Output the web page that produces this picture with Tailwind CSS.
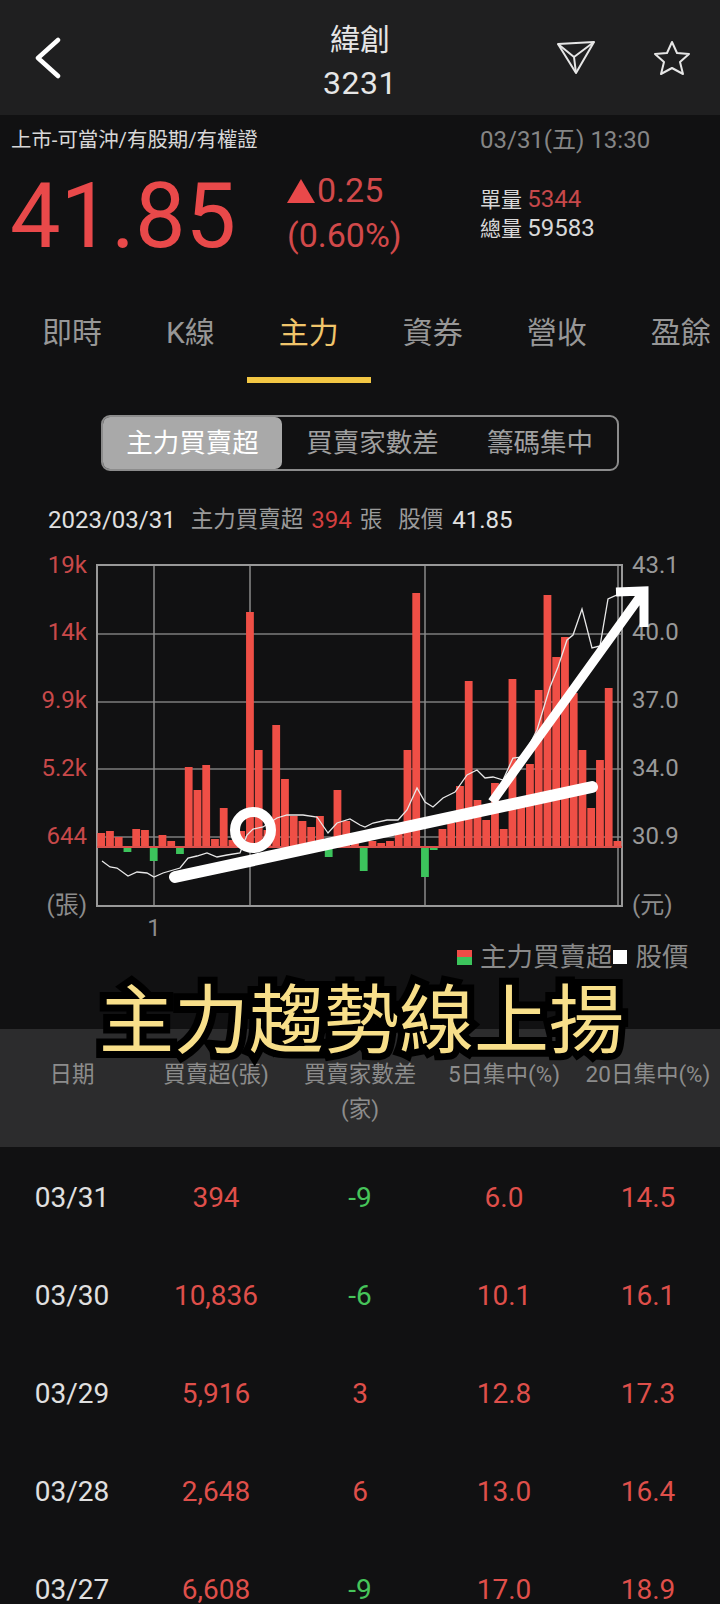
<!DOCTYPE html>
<html lang="zh-Hant">
<head>
  <meta charset="UTF-8" />
  <meta name="viewport" content="width=device-width, initial-scale=1.0"/>
  <title>緯創 3231</title>
  <script src="https://cdn.jsdelivr.net/npm/@tailwindcss/browser@4"></script>
</head>
<body class="bg-[#111112] font-['Roboto','Noto_Sans_CJK_TC',sans-serif]">
<div class="relative w-[720px] h-[1604px] overflow-hidden">

  <!-- Header -->
  <header class="h-[115px] bg-[#1f1f20] grid grid-cols-3 items-center">
    <div class="pl-[35px]">
      <svg class="w-[28px] h-[42px]" viewBox="0 0 28 42" fill="none" stroke="#fff" stroke-width="4.5" stroke-linecap="round" stroke-linejoin="round">
        <path d="M23 3 L3 21 L23 39"/>
      </svg>
    </div>
    <div class="text-center text-[#e6e6e6] pt-[8px]">
      <div class="text-[30px] leading-[42px]">緯創</div>
      <div class="text-[32px] leading-[44px] tracking-[0.5px]">3231</div>
    </div>
    <div class="flex justify-end items-center gap-[58px] pr-[29px]">
      <svg class="w-[38px] h-[34px]" viewBox="0 0 38 34" fill="none" stroke="#e6e6e6" stroke-width="2" stroke-linejoin="round">
        <path d="M1 3 L37 1 L19 32 Z"/>
        <path d="M1 3 L17 16 L19 32 M17 16 L37 1"/>
      </svg>
      <svg class="w-[38px] h-[36px]" viewBox="0 0 38 36" fill="none" stroke="#e6e6e6" stroke-width="2" stroke-linejoin="round">
        <path d="M19 2 L24 13 L36 14 L27 22 L30 34 L19 28 L8 34 L11 22 L2 14 L14 13 Z"/>
      </svg>
    </div>
  </header>

  <!-- Quote -->
  <section class="h-[186px] pl-[11px] pt-[11px]">
    <div class="flex items-center h-[28px]">
      <span class="w-[469px] text-[20.4px] text-[#d8d8d8]">上市-可當沖/有股期/有權證</span>
      <span class="text-[24px] text-[#858585]">03/31(五) 13:30</span>
    </div>
    <div class="flex mt-[13px]">
      <div class="w-[277px] text-[90px] leading-[100px] text-[#e9494a] ml-[-1px]">41.85</div>
      <div class="w-[193px] text-[34px] leading-[45px] text-[#d2494a] mt-[1px]">
        <div class="flex items-center">
          <svg class="w-[28px] h-[24px] mr-[2px]" viewBox="0 0 28 24"><path d="M14 0 L28 24 L0 24 Z" fill="#e9494a"/></svg>
          <span>0.25</span>
        </div>
        <div>(0.60%)</div>
      </div>
      <div class="text-[21px] leading-[28px] text-[#d8d8d8] mt-[18px]">
        <div>單量 <span class="text-[#c6484a] text-[24px]">5344</span></div>
        <div>總量 <span class="text-[24px]">59583</span></div>
      </div>
    </div>
  </section>

  <!-- Tabs -->
  <nav class="flex h-[82px] pl-[10px] text-[30px] leading-[36px] text-[#979797]">
    <div class="px-[32px] pt-[14px] whitespace-nowrap">即時</div>
    <div class="px-[32px] pt-[14px] whitespace-nowrap">K線</div>
    <div class="px-[32px] pt-[14px] whitespace-nowrap text-[#f0c56b] border-b-[6px] border-[#f3c744]">主力</div>
    <div class="px-[32px] pt-[14px] whitespace-nowrap">資券</div>
    <div class="px-[32px] pt-[14px] whitespace-nowrap">營收</div>
    <div class="px-[32px] pt-[14px] whitespace-nowrap">盈餘</div>
  </nav>

  <!-- Segmented control -->
  <div class="mt-[32px] ml-[101px] w-[518px] h-[56px] flex border-2 border-[#8c8c8c] rounded-[9px] text-[26.5px] leading-[52px] text-[#a0a0a0] text-center">
    <div class="w-[179px] bg-[#a9a9a9] text-white rounded-[7px]">主力買賣超</div>
    <div class="w-[181px]">買賣家數差</div>
    <div class="flex-1">籌碼集中</div>
  </div>

  <!-- Selected day -->
  <div class="mt-[36px] ml-[48px] h-[26px] flex items-center text-[22.5px] text-[#9a9a9a] whitespace-nowrap">
    <span class="text-[#e0e0e0] text-[24px] mr-[15px]">2023/03/31</span>
    <span>主力買賣超</span>
    <span class="text-[#d23f3f] text-[24px] ml-[8px] mr-[8px]">394</span>
    <span>張</span>
    <span class="ml-[16px] mr-[9px]">股價</span>
    <span class="text-[#e0e0e0] text-[24px]">41.85</span>
  </div>

  <!-- Chart -->
  <svg id="chart" class="block mt-[7px]" width="720" height="400" viewBox="0 540 720 400"></svg>

  <!-- Legend -->
  <div class="mt-[4px] h-[26px] pl-[457px] flex items-center text-[26.5px] text-[#8a8a8a] whitespace-nowrap">
    <span class="w-[15px] h-[15px] mr-[8px] bg-[linear-gradient(#ef4d47_50%,#3cc45c_50%)]"></span>
    <span>主力買賣超</span>
    <span class="w-[14px] h-[14px] mr-[9px] bg-white"></span>
    <span>股價</span>
  </div>

  <!-- Table header -->
  <div class="mt-[59px] h-[118px] bg-[#2c2c2d] grid grid-cols-5 pt-[28px] text-[22.5px] leading-[35px] text-[#8c8c8c] text-center">
    <div class="whitespace-nowrap">日期</div>
    <div class="whitespace-nowrap">買賣超(張)</div>
    <div class="whitespace-nowrap">買賣家數差<br>(家)</div>
    <div class="whitespace-nowrap">5日集中(%)</div>
    <div class="whitespace-nowrap">20日集中(%)</div>
  </div>

  <!-- Table rows -->
  <div class="pt-[2px] text-[28px] text-center text-[#df4f4a]">
    <div class="h-[98px] grid grid-cols-5 items-center">
      <div class="text-[#e0e0e0]">03/31</div><div>394</div><div class="text-[#46c45a]">-9</div><div>6.0</div><div>14.5</div>
    </div>
    <div class="h-[98px] grid grid-cols-5 items-center">
      <div class="text-[#e0e0e0]">03/30</div><div>10,836</div><div class="text-[#46c45a]">-6</div><div>10.1</div><div>16.1</div>
    </div>
    <div class="h-[98px] grid grid-cols-5 items-center">
      <div class="text-[#e0e0e0]">03/29</div><div>5,916</div><div>3</div><div>12.8</div><div>17.3</div>
    </div>
    <div class="h-[98px] grid grid-cols-5 items-center">
      <div class="text-[#e0e0e0]">03/28</div><div>2,648</div><div>6</div><div>13.0</div><div>16.4</div>
    </div>
    <div class="h-[98px] grid grid-cols-5 items-center">
      <div class="text-[#e0e0e0]">03/27</div><div>6,608</div><div class="text-[#46c45a]">-9</div><div>17.0</div><div>18.9</div>
    </div>
  </div>

  <!-- Caption pasted over the screenshot -->
  <div class="absolute left-[99px] top-[984px] text-[75px] leading-[75px] text-[#f8df8a] whitespace-nowrap [-webkit-text-stroke:14px_#000] [paint-order:stroke_fill]">主力趨勢線上揚</div>
</div>

<script>
  const chart = document.getElementById('chart');
  const baseY = 847;
  // bar heights in px above the zero line, negative goes green
  const bars = [14,16,10,-5,18,17,-14,12,6,-7,80,57,82,8,39,7,16,235,97,17,122,68,31,26,20,31,-10,57,26,14,-24,6,4,6,14,97,254,-30,-3,18,24,61,166,47,27,64,18,168,41,83,157,252,190,210,154,97,39,87,159,6];
  const price = '102,861 110,867 117,868 128,876 137,872 147,873 154,877 163,873 180,868 188,858 197,856 207,853 217,857 227,855 240,853 247,835 253,829 263,827 277,818 287,815 303,815 317,817 328,833 337,823 350,819 360,825 365,827 373,823 387,820 398,820 407,810 417,788 425,802 433,807 443,798 455,792 467,775 477,770 485,778 493,777 503,780 513,758 523,757 537,730 550,687 558,667 567,640 573,635 582,609 592,648 600,646 608,599 617,595 622,595';
  const yLeft = [[565,'19k'],[632,'14k'],[700,'9.9k'],[768,'5.2k'],[836,'644']];
  const yRight = [[565,'43.1'],[632,'40.0'],[700,'37.0'],[768,'34.0'],[836,'30.9']];

  let svg = '';
  [634,702,769,837].forEach(y => {
    svg += `<line x1="97" x2="622" y1="${y}" y2="${y}" stroke="#7d7d7d" stroke-width="1.5"/>`;
  });
  [154,250,425,618].forEach(x => {
    svg += `<line x1="${x}" x2="${x}" y1="565" y2="906" stroke="#8a8a8a" stroke-width="1.5"/>`;
  });
  svg += `<rect x="97" y="565" width="525" height="341" fill="none" stroke="#999" stroke-width="2"/>`;
  bars.forEach((h, i) => {
    const x = 97.3 + i * 8.75;
    if (h > 0) svg += `<rect x="${x}" y="${baseY - h}" width="7.8" height="${h}" fill="#ef4f46"/>`;
    else svg += `<rect x="${x}" y="${baseY}" width="7.8" height="${-h}" fill="#3cc45c"/>`;
  });
  svg += `<rect x="97" y="846" width="525" height="2" fill="#d9504c"/>`;
  svg += `<polyline points="${price}" fill="none" stroke="#e8e8e8" stroke-width="1.3"/>`;

  const labelFont = 'font-size="24" font-family="Roboto, Noto Sans CJK TC, sans-serif"';
  yLeft.forEach(([y, t]) => {
    svg += `<text x="87" y="${y + 8}" text-anchor="end" fill="#c8494a" ${labelFont}>${t}</text>`;
  });
  yRight.forEach(([y, t]) => {
    svg += `<text x="632" y="${y + 8}" fill="#999" ${labelFont}>${t}</text>`;
  });
  svg += `<text x="87" y="913" text-anchor="end" fill="#8c8c8c" ${labelFont}>(張)</text>`;
  svg += `<text x="632" y="913" fill="#8c8c8c" ${labelFont}>(元)</text>`;
  svg += `<text x="154" y="936" text-anchor="middle" fill="#8c8c8c" ${labelFont}>1</text>`;

  // hand drawn trend marks on top
  svg += `<circle cx="253" cy="830" r="18" fill="none" stroke="#fff" stroke-width="10"/>`;
  svg += `<line x1="175" y1="877" x2="592" y2="787" stroke="#fff" stroke-width="12" stroke-linecap="round"/>`;
  svg += `<path d="M492 802 L642 594 M616 592 L644 591 L644 627" fill="none" stroke="#fff" stroke-width="9"/>`;
  chart.innerHTML = svg;
</script>
</body>
</html>
